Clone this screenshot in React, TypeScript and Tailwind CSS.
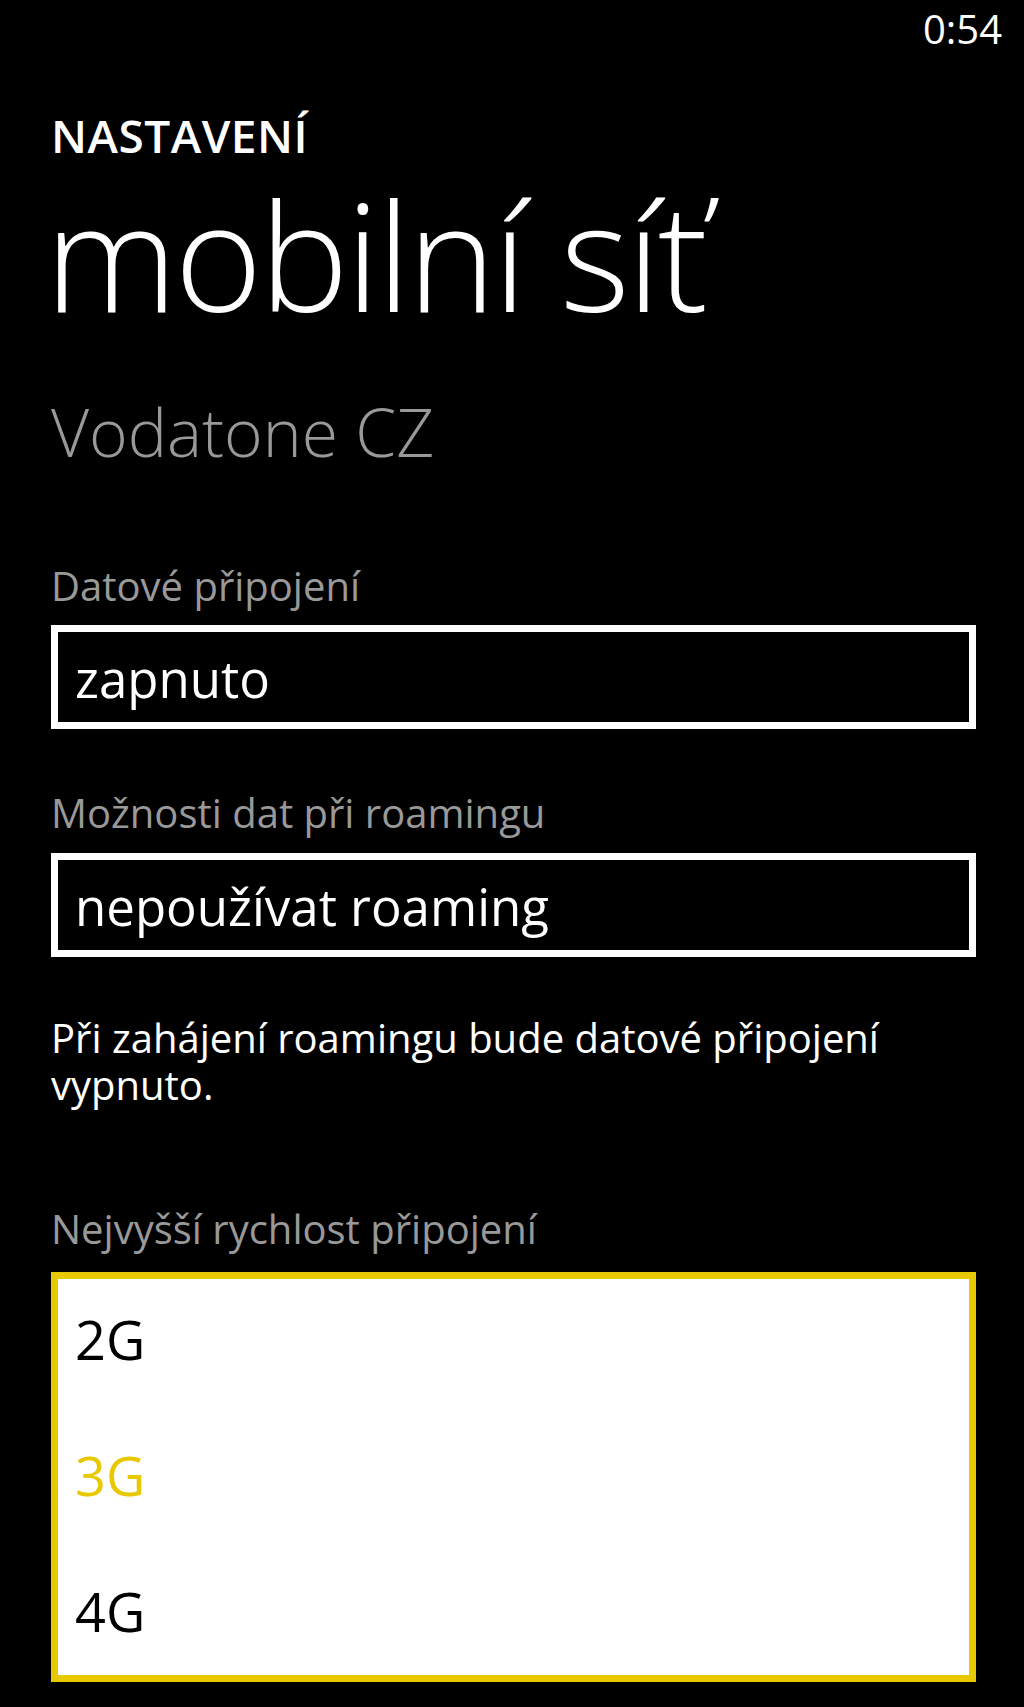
import React from "react";

const font = { fontFamily: '"Open Sans", "Noto Sans", sans-serif' };

function Label({ text, className }: { text: string; className?: string }) {
  return (
    <div className={"text-[40px] leading-[40px] text-[#999999] " + (className ?? "")}>
      {text}
    </div>
  );
}

function Picker({ value, className }: { value: string; className?: string }) {
  return (
    <div className={"h-[104px] border-[7px] border-white bg-black pt-[2px] pl-[17px] " + (className ?? "")}>
      <div className="text-[51px] leading-[88px] text-white">{value}</div>
    </div>
  );
}

export default function App() {
  const speeds = ["2G", "3G", "4G"];
  const selected = "3G";

  return (
    <div className="w-[1024px] h-[1707px] overflow-hidden bg-black text-white" style={font}>
      {/* status bar */}
      <div className="flex justify-end pt-[8px] pr-[22px]">
        <span className="text-[40px] leading-[42px] text-white">0:54</span>
      </div>

      <div className="pl-[51px] pr-[48px]">
        <div className="mt-[62px] text-[46px] leading-[46px] font-semibold tracking-[0.5px]">NASTAVENÍ</div>
        <div className="mt-[21px] ml-[-6px] text-[150px] leading-[150px] font-light tracking-[-3px]">
          mobilní síť
        </div>
        <div className="mt-[69px] text-[66px] leading-[66px] font-light text-[#999999]">Vodatone CZ</div>

        <Label text="Datové připojení" className="mt-[102px]" />
        <Picker value="zapnuto" className="mt-[19px]" />

        <Label text="Možnosti dat při roamingu" className="mt-[64px]" />
        <Picker value="nepoužívat roaming" className="mt-[20px]" />

        <p className="mt-[57px] text-[40px] leading-[47px] text-white">
          Při zahájení roamingu bude datové připojení
          <br />
          vypnuto.
        </p>

        <Label text="Nejvyšší rychlost připojení" className="mt-[101px]" />

        <div className="mt-[23px] h-[410px] border-[7px] border-[#e8c900] bg-white pt-[10px] pl-[17px] flex flex-col gap-[36px]">
          {speeds.map((s) => (
            <div
              key={s}
              className={
                "text-[54px] leading-[100px] " + (s === selected ? "text-[#e8c900]" : "text-black")
              }
            >
              {s}
            </div>
          ))}
        </div>
      </div>
    </div>
  );
}
